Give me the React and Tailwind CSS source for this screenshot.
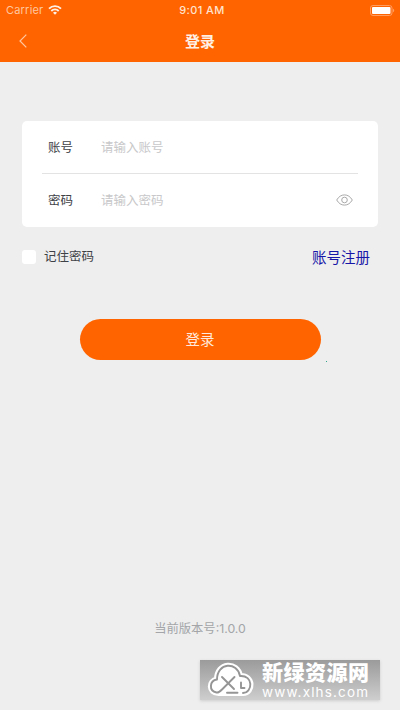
import { useState } from "react";

const StatusBar = () => (
  <div className="grid h-5 grid-cols-3 items-center text-[11px] leading-5 text-[#ffe3cf]">
    <div className="flex items-center gap-[5px] pl-1.5">
      <span className="tracking-[0.2px] text-[#ffc79f]">Carrier</span>
      <svg viewBox="0 0 14 10" className="h-2.5 w-3.5" fill="none" stroke="#fff0e5">
        <path d="M1 3.6a8.6 8.6 0 0 1 12 0" strokeWidth="1.9" />
        <path d="M3.3 6a5.3 5.3 0 0 1 7.4 0" strokeWidth="1.8" />
        <path d="M7 9.8 5 7.7a2.8 2.8 0 0 1 4 0Z" fill="#fff0e5" stroke="none" />
      </svg>
    </div>
    <span className="pl-1 text-center font-medium tracking-[0.4px]">9:01 AM</span>
    <svg viewBox="0 0 25 11" className="mr-[5px] h-[11px] w-[25px] justify-self-end">
      <rect x="0.5" y="0.5" width="21.5" height="10" rx="2.5" fill="none" stroke="#ff9c60" />
      <rect x="2" y="2" width="18.5" height="7" rx="1" fill="#fff" />
      <path d="M23.2 3.8v3.4c1.3-.5 1.3-2.9 0-3.4Z" fill="#ffab76" />
    </svg>
  </div>
);

const Header = () => (
  <header className="h-[62px] bg-[#ff6400]">
    <StatusBar />
    <div className="grid h-[42px] grid-cols-3 items-center">
      <button type="button" aria-label="返回" className="pl-[19px]">
        <svg viewBox="0 0 8 14" className="h-3.5 w-2" fill="none" stroke="#ffc7a0" strokeWidth="1.2">
          <path d="M7.3.6 1 7l6.3 6.4" />
        </svg>
      </button>
      <h1 className="pt-0.5 text-center text-[15px] font-bold text-[#fff0e5]">登录</h1>
    </div>
  </header>
);

const EyeIcon = () => (
  <svg viewBox="0 0 17 12" className="h-3 w-[17px]" fill="none" stroke="#a9a9a9" strokeWidth="1">
    <path d="M.7 6C2.7 2.6 5.3.9 8.5.9S14.3 2.6 16.3 6c-2 3.4-4.6 5.1-7.8 5.1S2.7 9.4.7 6Z" />
    <circle cx="8.5" cy="6" r="2.8" />
  </svg>
);

const Field = ({ label, children, ...inputProps }) => (
  <label className="flex h-[53px] items-center pl-1.5 pr-[5px]">
    <span className="w-[53px] shrink-0 pt-0.5 text-[12.5px] text-[#3e4247]">{label}</span>
    <input
      className="h-6 min-w-0 flex-1 bg-transparent text-[12.5px] text-[#3e4247] outline-none placeholder:text-[#c8c8ca]"
      {...inputProps}
    />
    {children}
  </label>
);

const CloudLogo = () => (
  <svg viewBox="0 0 62 40" className="h-10 w-[62px] shrink-0" fill="none" strokeLinecap="round" strokeLinejoin="round">
    <path
      d="M18.5 33C8.5 33 8.5 20.5 17 19.5C17 2 37.5 1.5 40 16C53.5 15 53.5 33 43 33Z"
      fill="#fff"
      stroke="#fff"
      strokeWidth="6"
    />
    <g stroke="#959595" strokeWidth="1.9">
      <path d="M34.5 17 22 29.5C19.5 32 18.5 33 16.5 32.5C8.5 31 9.5 20.5 17 19.5C17 2 37.5 1.5 40 16C53.5 15 53 32.5 43 33" />
      <path d="m22 17 12 12M27 32.7h10.500" />
      <path d="M41 22.500v5.500h3.500" />
    </g>
  </svg>
);

const SiteBadge = () => (
  <div className="absolute left-[200px] top-[660px] flex h-10 w-[180px] bg-linear-to-b from-[#9b9b9b] to-[#cecece] shadow-[0_1px_3px_#cccccc]">
    <CloudLogo />
    <div className="flex flex-col text-white">
      <span className="h-[25px] text-[21px] font-black leading-[26px] tracking-[0.5px]">新绿资源网</span>
      <span className="h-3.5 text-[13.5px] leading-[14px] tracking-[1.15px]">www.xlhs.com</span>
    </div>
  </div>
);

export default function App() {
  const [showPassword, setShowPassword] = useState(false);

  return (
    <div className="relative flex h-[710px] w-[400px] flex-col overflow-hidden bg-[#eeeeee] font-[Inter,'Noto_Sans_CJK_SC',sans-serif]">
      <Header />

      <main className="flex flex-1 flex-col px-[22px] pt-[58.5px]">
        <form className="flex flex-col">
          <div className="h-[106px] rounded-[5px] bg-white px-5">
            <Field label="账号" type="text" placeholder="请输入账号" />
            <div className="-mt-px h-px bg-[#e3e3e3]" />
            <Field label="密码" type={showPassword ? "text" : "password"} placeholder="请输入密码">
              <button type="button" aria-label="显示密码" onClick={() => setShowPassword(!showPassword)}>
                <EyeIcon />
              </button>
            </Field>
          </div>

          <div className="mt-[18px] flex h-6 items-center justify-between pr-2">
            <label className="flex items-center gap-2 text-[12.5px] text-[#3e4247]">
              <input type="checkbox" className="size-3.5 appearance-none rounded-[3px] bg-white checked:bg-[#ff6400]" />
              <span className="pt-0.5">记住密码</span>
            </label>
            <a href="#register" className="pt-0.5 text-[14.5px] text-[#1616a8]">账号注册</a>
          </div>

          <button
            type="button"
            className="mx-auto mt-[50px] h-[41px] w-[241px] rounded-full bg-[#ff6400] pt-0.5 text-[14.5px] text-[#ffe9db]"
          >
            登录
          </button>
        </form>
        <span className="ml-[304px] mt-px size-px bg-[#35a58c]" />
        <p className="mb-[70px] mt-auto text-center text-[12.3px] leading-[22px] text-[#a3a5a8]">当前版本号:1.0.0</p>
      </main>

      <SiteBadge />
    </div>
  );
}
